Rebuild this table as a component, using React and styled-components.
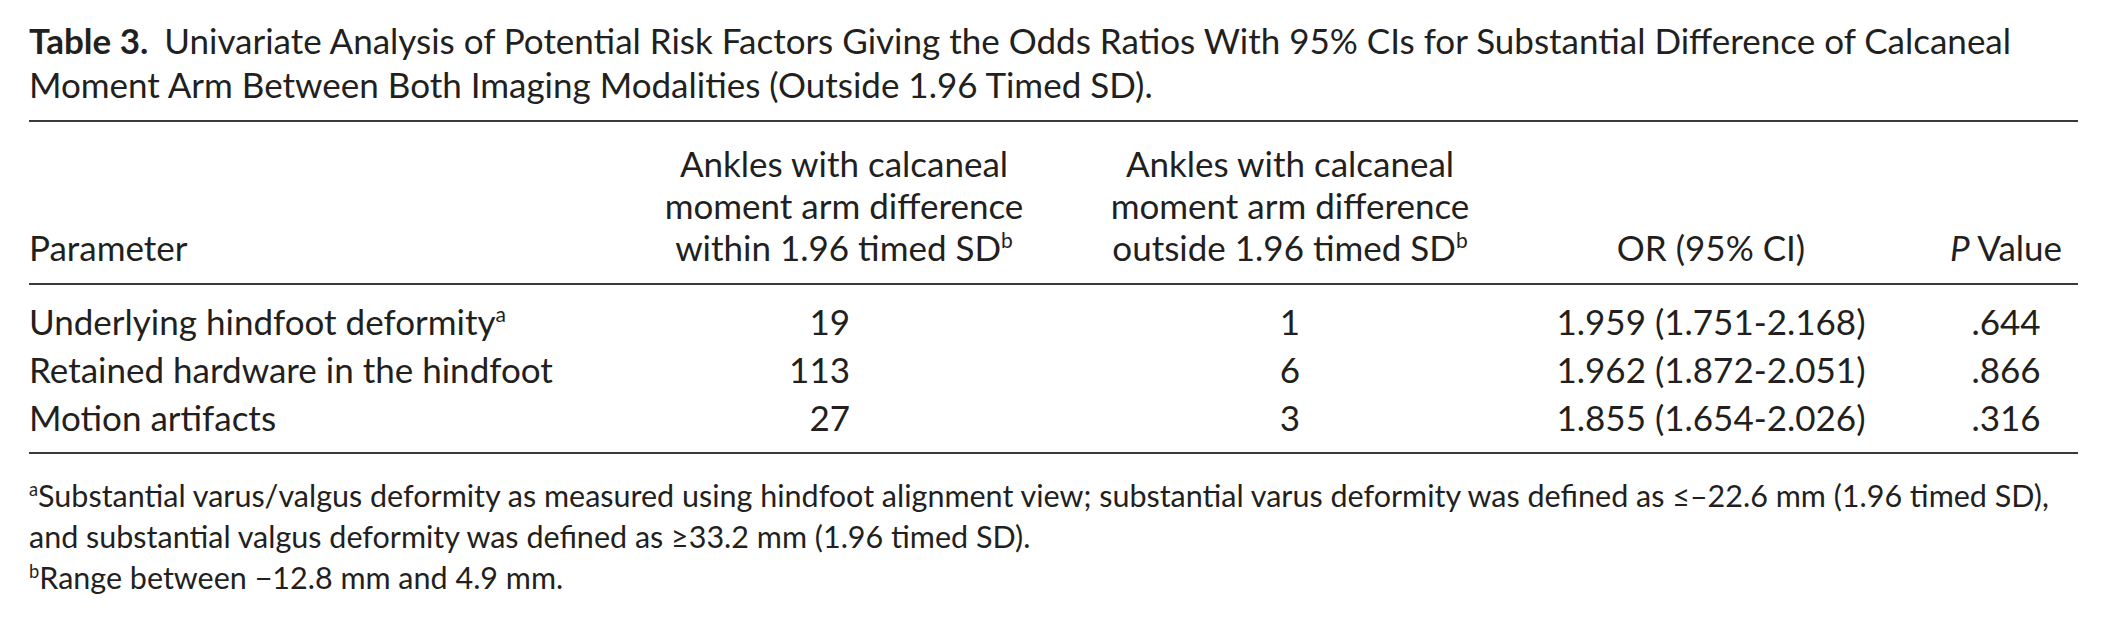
import React from 'react';
import styled, { createGlobalStyle } from 'styled-components';

const GlobalStyle = createGlobalStyle`
  html, body {
    margin: 0;
    padding: 0;
    background: #ffffff;
  }
  body {
    font-family: Lato, 'Open Sans', sans-serif;
    color: #231f20;
  }
`;

const Page = styled.div`
  width: 2101px;
  box-sizing: border-box;
  padding: 18px 27px 0 29px;
`;

const Caption = styled.p`
  margin: 0 0 14px;
  font-size: 35px;
  line-height: 44px;
  white-space: nowrap;
`;

const CaptionLabel = styled.strong`
  font-weight: 700;
  margin-right: 16px;
`;

const Table = styled.table`
  width: 100%;
  border-collapse: collapse;
  table-layout: fixed;
  font-size: 35px;
  border-top: 2px solid #3a3a3a;
  border-bottom: 2px solid #3a3a3a;
`;

const HeadRow = styled.tr`
  border-bottom: 2px solid #3a3a3a;
`;

const HeadCell = styled.th`
  font-weight: 400;
  line-height: 42px;
  vertical-align: bottom;
  white-space: nowrap;
  text-align: ${(p) => p.$align || 'center'};
  padding: 20px ${(p) => p.$padRight || 0}px 15px ${(p) => p.$padLeft || 0}px;
  width: ${(p) => p.$width}px;
`;

const Cell = styled.td`
  line-height: 48px;
  text-align: ${(p) => p.$align || 'center'};
  padding: ${(p) => (p.$first ? 12 : 0)}px ${(p) => p.$padRight || 0}px ${(p) => (p.$last ? 11 : 0)}px ${(p) => p.$padLeft || 0}px;
  white-space: nowrap;
`;

const Sup = styled.sup`
  font-size: 0.6em;
  line-height: 0;
  vertical-align: 0.6em;
`;

const Italic = styled.em`
  font-style: italic;
`;

const Notes = styled.div`
  margin-top: 21px;
  font-size: 30.5px;
  line-height: 41px;
  white-space: nowrap;
`;

const Note = styled.p`
  margin: 0;
`;

const rows = [
  { name: 'Underlying hindfoot deformity', mark: 'a', within: '19', outside: '1', or: '1.959 (1.751-2.168)', p: '.644' },
  { name: 'Retained hardware in the hindfoot', within: '113', outside: '6', or: '1.962 (1.872-2.051)', p: '.866' },
  { name: 'Motion artifacts', within: '27', outside: '3', or: '1.855 (1.654-2.026)', p: '.316' },
];

export default function App() {
  return (
    <Page>
      <GlobalStyle />
      <Caption>
        <CaptionLabel>Table 3.</CaptionLabel>
        Univariate Analysis of Potential Risk Factors Giving the Odds Ratios With 95% CIs for Substantial Difference of Calcaneal
        <br />
        Moment Arm Between Both Imaging Modalities (Outside 1.96 Timed SD).
      </Caption>
      <Table>
        <thead>
          <HeadRow>
            <HeadCell $align="left" $width={571}>Parameter</HeadCell>
            <HeadCell $width={488}>
              Ankles with calcaneal<br />moment arm difference<br />within 1.96 timed SD<Sup>b</Sup>
            </HeadCell>
            <HeadCell $width={404}>
              Ankles with calcaneal<br />moment arm difference<br />outside 1.96 timed SD<Sup>b</Sup>
            </HeadCell>
            <HeadCell $width={438}>OR (95% CI)</HeadCell>
            <HeadCell $width={144} $padLeft={4}>
              <Italic>P</Italic> Value
            </HeadCell>
          </HeadRow>
        </thead>
        <tbody>
          {rows.map((r, i) => {
            const first = i === 0;
            const last = i === rows.length - 1;
            return (
              <tr key={r.name}>
                <Cell $align="left" $first={first} $last={last}>
                  {r.name}
                  {r.mark && <Sup>{r.mark}</Sup>}
                </Cell>
                <Cell $align="right" $padRight={238} $first={first} $last={last}>{r.within}</Cell>
                <Cell $first={first} $last={last}>{r.outside}</Cell>
                <Cell $first={first} $last={last}>{r.or}</Cell>
                <Cell $padLeft={4} $first={first} $last={last}>{r.p}</Cell>
              </tr>
            );
          })}
        </tbody>
      </Table>
      <Notes>
        <Note>
          <Sup>a</Sup>Substantial varus/valgus deformity as measured using hindfoot alignment view; substantial varus deformity was defined as ≤–22.6 mm (1.96 timed SD),
          <br />
          and substantial valgus deformity was defined as ≥33.2 mm (1.96 timed SD).
        </Note>
        <Note>
          <Sup>b</Sup>Range between −12.8 mm and 4.9 mm.
        </Note>
      </Notes>
    </Page>
  );
}
